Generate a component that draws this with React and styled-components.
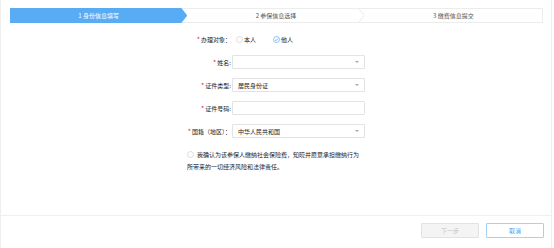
import React from "react";
import styled, { createGlobalStyle } from "styled-components";

const Global = createGlobalStyle`
  html, body { margin: 0; padding: 0; background: #fff; }
  body { font-family: "Noto Sans CJK SC", "Noto Sans", sans-serif; }
  * { box-sizing: border-box; }
`;

const Frame = styled.div`
  width: 552px;
  height: 248px;
  border-left: 1px solid #efefef;
  border-right: 1px solid #efefef;
  display: flex;
  flex-direction: column;
  font-size: 6px;
  color: #222;
`;

const StepBar = styled.div`
  margin: 8px 8px 0 9px;
  height: 15px;
  border: 1px solid #ececec;
  display: flex;
`;

const Step = styled.div`
  position: relative;
  flex: 1;
  display: flex;
  align-items: center;
  justify-content: center;
  font-size: 6px;
  color: ${(p) => (p.$active ? "#fff" : "#555")};
  ${(p) =>
    p.$active &&
    `
    background: #57acf4;
    margin: -1px 0 -1px -1px;
    height: 15px;
    clip-path: polygon(0 0, calc(100% - 6px) 0, 100% 50%, calc(100% - 6px) 100%, 0 100%);
  `}
`;

const Chevron = styled.svg`
  position: absolute;
  right: 0;
  top: 0;
`;

const Form = styled.div`
  margin: 9px 0 0 150px;
  display: grid;
  grid-template-columns: 80px 133px;
  column-gap: 1px;
  row-gap: 9px;
  grid-auto-rows: 14px;
`;

const Label = styled.div`
  display: flex;
  align-items: center;
  justify-content: flex-end;
  color: #222;
  white-space: nowrap;
`;

const Star = styled.span`
  color: #f01e1e;
  font-size: 7px;
  margin-right: 1px;
`;

const RadioGroup = styled.div`
  display: flex;
  align-items: center;
  padding-left: 4px;
  gap: 17px;
`;

const RadioItem = styled.label`
  display: flex;
  align-items: center;
  gap: 1px;
  color: #222;
`;

const Dot = styled.svg`
  flex: none;
  display: block;
`;

const Field = styled.div`
  position: relative;
  height: 14px;
  border: 1px solid #e3e3e3;
  border-radius: 1px;
  background: #fff;
  display: flex;
  align-items: center;
  padding-left: 5px;
  color: #222;
`;

const Caret = styled.span`
  position: absolute;
  right: 5px;
  top: 5px;
  width: 0;
  height: 0;
  border-left: 2px solid transparent;
  border-right: 2px solid transparent;
  border-top: 2px solid #a8a8a8;
`;

const Statement = styled.p`
  margin: 11px 0 0 186px;
  width: 177px;
  line-height: 12px;
  color: #222;
`;

const RadioInline = styled.span`
  display: inline-block;
  vertical-align: -1px;
  margin-right: 3px;
`;

const Footer = styled.div`
  margin-top: auto;
  height: 33px;
  border-top: 1px solid #efefef;
  display: flex;
  justify-content: flex-end;
  gap: 7px;
  padding: 7px 7px 0 0;
`;

const Button = styled.button`
  width: 58px;
  height: 15px;
  padding: 0;
  font-family: inherit;
  font-size: 6px;
  border-radius: 1px;
  border: 1px solid ${(p) => (p.$primary ? "#a3d1f8" : "#e2e2e2")};
  background: ${(p) => (p.$primary ? "#fff" : "#f4f4f4")};
  color: ${(p) => (p.$primary ? "#4b9ef0" : "#c4c4c4")};
`;

function RadioDot({ checked }) {
  return (
    <Dot width="7" height="7" viewBox="0 0 7 7">
      <circle cx="3.5" cy="3.5" r="3" fill="#fff" stroke={checked ? "#57acf4" : "#cfcfcf"} strokeWidth="0.7" />
      {checked && <polyline points="1.9,3.6 3.1,4.7 5.2,2.4" fill="none" stroke="#57acf4" strokeWidth="0.8" />}
    </Dot>
  );
}

const steps = ["1 身份信息填写", "2 参保信息选择", "3 缴费信息提交"];

export default function App() {
  return (
    <>
      <Global />
      <Frame>
        <StepBar>
          {steps.map((s, i) => (
            <Step key={s} $active={i === 0}>
              {s}
              {i === 1 && (
                <Chevron width="6" height="13" viewBox="0 0 6 13">
                  <polyline points="0,0 5.5,6.5 0,13" fill="none" stroke="#e6e6e6" strokeWidth="0.8" />
                </Chevron>
              )}
            </Step>
          ))}
        </StepBar>

        <Form>
          <Label><Star>*</Star>办理对象：</Label>
          <RadioGroup>
            <RadioItem><RadioDot />本人</RadioItem>
            <RadioItem><RadioDot checked />他人</RadioItem>
          </RadioGroup>

          <Label><Star>*</Star>姓名:</Label>
          <Field><Caret /></Field>

          <Label><Star>*</Star>证件类型:</Label>
          <Field>居民身份证<Caret /></Field>

          <Label><Star>*</Star>证件号码:</Label>
          <Field />

          <Label><Star>*</Star>国籍（地区）：</Label>
          <Field>中华人民共和国<Caret /></Field>
        </Form>

        <Statement>
          <RadioInline><RadioDot /></RadioInline>
          我确认为该参保人缴纳社会保险费，知晓并愿意承担缴纳行为所带来的一切经济风险和法律责任。
        </Statement>

        <Footer>
          <Button disabled>下一步</Button>
          <Button $primary>取消</Button>
        </Footer>
      </Frame>
    </>
  );
}
